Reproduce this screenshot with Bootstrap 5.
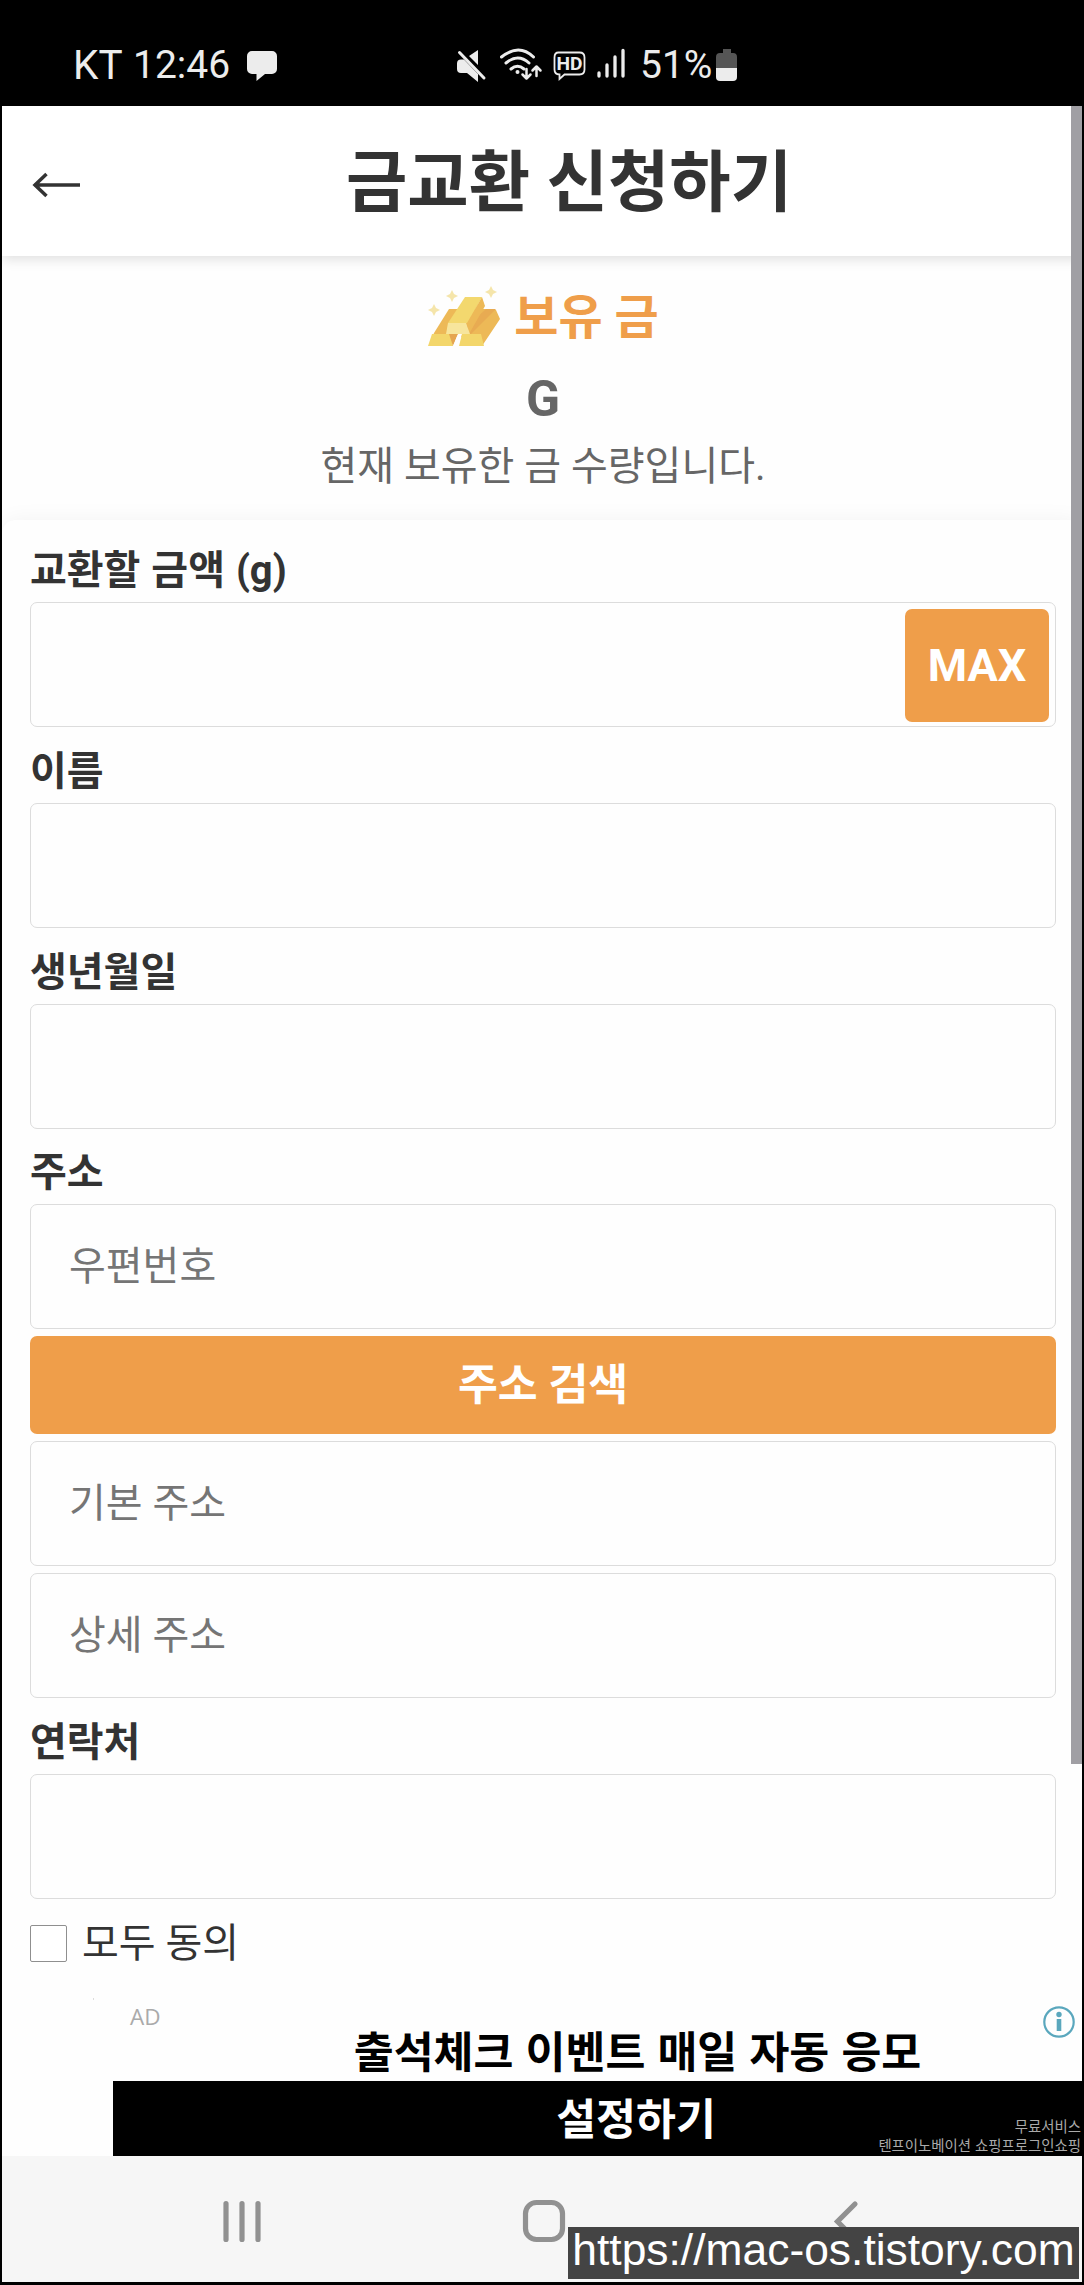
<!DOCTYPE html>
<html lang="ko">
<head>
<meta charset="utf-8">
<meta name="viewport" content="width=device-width, initial-scale=1">
<title>금교환 신청하기</title>
<link href="https://cdn.jsdelivr.net/npm/bootstrap@5.3.0/dist/css/bootstrap.min.css" rel="stylesheet">
<style>
body{background:#000;font-family:Roboto,"Noto Sans CJK KR",sans-serif;color:#333;height:2285px;overflow:hidden;line-height:1}
svg{display:block;flex:none}
.phone{height:2282px;margin:0 2px;background:#fefefe}
.status-bar{height:106px;background:#000;color:#ececec;font-size:39px;padding:42px 0 18px 73px;margin:0 -2px}
.status-bar .carrier{width:60px;font-size:40.5px}
.status-bar .clock{width:111px}
.status-icons{margin-left:177px}
.app-header{height:150px;padding-left:30px;background:#fff;box-shadow:0 3px 12px rgba(0,0,0,.13);z-index:2}
.app-header h1{font-size:66.7px;font-weight:700;line-height:90px;margin:3px 0 0 -26px}
.balance{height:264px;padding-top:24px;background:#fefefe;color:#666}
.balance h2{font-size:48px;font-weight:700;line-height:76px;color:#ef9e4a;margin:0}
.balance .amount{font-size:50px;font-weight:700;line-height:60px;margin:13px -2px 0 0}
.balance p{font-size:40px;line-height:52px;margin:12px -2px 0 0}
.balance svg{margin:-3px 13px 0 2px}
.exchange{padding:6px 26px 0 28px;background:#fefefe;border-radius:14px 14px 0 0;box-shadow:0 0 22px rgba(0,0,0,.05);z-index:1;height:1477px}
.exchange .form-label{display:block;font-size:40px;font-weight:700;line-height:52px;margin:0;padding:19px 0 0;height:76px;word-spacing:1px}
.exchange .form-label.tight{height:75px;padding-top:18px}
.exchange .form-control{height:125px;border:1px solid #dcdcdc;border-radius:7px;background:#fefefe;font-size:40px;padding:0 38px;line-height:60px}
.exchange .form-control::placeholder{color:#757575;opacity:1}
.exchange .btn{--bs-btn-bg:#ef9e4a;--bs-btn-color:#fff;--bs-btn-border-color:#ef9e4a;font-size:43.3px;font-weight:700;border:0;border-radius:7px;line-height:1;padding:2px 0 0}
.stack{gap:7px}
.exchange .btn-max{width:144px;height:113px;top:7px;right:7px;font-size:45px;padding:0 0 1px}
.btn-find{height:98px}
.agree{height:60px;margin-top:14px}
.agree .form-check-input{width:37px;height:37px;border:1px solid #8f8f8f;border-radius:2px;margin:0;background:#fff}
.agree label{font-size:40px;line-height:52px;margin-left:15px;padding-top:2px}
.ad-banner{height:159px;padding-top:1px;background:#fefefe;color:#000;font-family:"Noto Sans CJK KR",sans-serif;font-weight:700;font-size:43.4px;z-index:2}
.ad-specks{top:1px;left:88px}
.ad-body{margin-left:111px}
.ad-top{height:83px;background:#fefefe}
.ad-tag{font:400 22.5px "Open Sans",sans-serif;color:#aaa;top:3px;left:17px}
.ad-title{line-height:60px;padding-top:21px;text-align:center;padding-left:80px}
.ad-cta{height:75px;background:#000;color:#fff;text-align:center;padding-left:77px;line-height:71px}
.ad-note{font-size:14.4px;line-height:19px;font-weight:400;color:#aaa;right:1px;bottom:2px;text-align:right;white-space:nowrap}
.info{right:7px;top:8px}
.nav-keys{height:126px;background:#f6f6f6}
.track{left:1071px;top:106px;width:11px;height:1658px;background:#a09fa4;z-index:5}
.site-mark{left:568px;top:2227px;width:511px;height:52px;background:#444;color:#fff;font:44.4px/46px "Liberation Sans",sans-serif;text-align:center;white-space:nowrap;z-index:6}
</style>
</head>
<body>
<div class="phone d-flex flex-column">
  <div class="status-bar d-flex align-items-center">
    <span class="carrier">KT</span><span class="clock">12:46</span>
    <svg width="34" height="34" viewBox="0 0 34 34" fill="#ececec"><path d="M8 3h20a5 5 0 0 1 5 5v13a5 5 0 0 1-5 5h-7l-8.500 7V26H8a5 5 0 0 1-5-5V8a5 5 0 0 1 5-5z"/></svg>
    <div class="status-icons d-flex align-items-center">
      <svg width="181" height="40" viewBox="0 0 181 40" fill="none" stroke="#ececec">
        <g transform="translate(0 3)">
        <path d="M2 15.500q0-4 4-4h3L23 26v8L12 25H6q-4 0-4-4zM14 8l9-6v15z" fill="#ececec" stroke="none"/>
        <path d="M4.500 4.500 29 30" stroke-width="3" stroke-linecap="round"/>
        <g stroke-width="3" stroke-linecap="round"><path d="M46.500 9q17.500-14 32 0M51 15q12-10 23 0M56 21q6.500-5.500 13 0"/><circle cx="62.500" cy="24" r="1" stroke-width="2"/></g>
        <path d="M71.500 21v9M67.500 26.500l4 4 4-4M81.500 28v-9M77.500 22.500l4-4 4 4" stroke-width="2.500" stroke-linecap="round" stroke-linejoin="round"/>
        <path d="M103.500 4.500h21q5 0 5 5v12q0 5-5 5h-15l-5 4.500v-4.500q-5 0-5-5v-12q0-5 4-5z" stroke-width="1.800"/>
        <text x="101.500" y="22" font-size="18.500" font-weight="700" font-family="Roboto" fill="#ececec" stroke="none" textLength="26" lengthAdjust="spacingAndGlyphs">HD</text>
        <path d="M144 25v3M152 17v11M160 9v19M168 2.500v25.500" stroke-width="3.300" stroke-linecap="round"/>
        </g>
      </svg>
      <span class="ms-1">51%</span>
      <svg class="ms-1" width="22" height="34" viewBox="0 0 22 34"><path d="M7 1h8v4h2q4 0 4 4v11H0V9q0-4 4-4h3z" fill="#555"/><path d="M0 20h21v9q0 4-4 4H4q-4 0-4-4z" fill="#ececec"/></svg>
    </div>
  </div>

  <header class="app-header d-flex align-items-center position-relative">
    <svg width="50" height="26" viewBox="0 0 50 26" fill="none" stroke="#333" stroke-width="3.500" class="mt-2"><path d="M2 13h46M14.500 2 3 13l11.500 11"/></svg>
    <h1 class="flex-grow-1 text-center">금교환 신청하기</h1>
  </header>

  <section class="balance text-center position-relative">
    <div class="d-flex justify-content-center align-items-center">
      <svg width="74" height="64" viewBox="0 0 74 64">
        <path d="M22 24h37l10 1 4 9-18 27-27-12-6 12H2l5-13z" fill="#edb957"/>
        <path d="M59 24h10L44 49 34 47z" fill="#e8ab52"/>
        <path d="M38 12h17L41 38H21z" fill="#f3d86e"/><path d="M55 12l3 9-16 28-2-11z" fill="#edb957"/>
        <path d="M21 38h18l4 11H19z" fill="#f7e59c"/>
        <path d="M5 49h19l2 12H1zM35 49h19l3 12H32z" fill="#f3d66b"/><path d="M22 49h9l-5 12z" fill="#e5a550"/><path d="M31 49h4l-4 12h-5z" fill="#fefefe"/>
        <g fill="#f5e5aa"><path d="M25 5l2 4 4 2-4 2-2 4-2-4-4-2 4-2zM64 1l2 4 4 2-4 2-2 4-2-4-4-2 4-2zM7 19l2 4 4 2-4 2-2 4-2-4-4-2 4-2z"/></g>
      </svg>
      <h2>보유 금</h2>
    </div>
    <div class="amount">G</div>
    <p>현재 보유한 금 수량입니다.</p>
  </section>

  <form class="exchange position-relative">
    <label class="form-label" for="gold">교환할 금액 (g)</label>
    <div class="position-relative">
      <input class="form-control" id="gold" type="text">
      <button class="btn btn-max position-absolute" type="button">MAX</button>
    </div>
    <label class="form-label" for="name">이름</label>
    <input class="form-control" id="name" type="text">
    <label class="form-label" for="birth">생년월일</label>
    <input class="form-control" id="birth" type="text">
    <label class="form-label tight" for="zip">주소</label>
    <div class="stack d-flex flex-column">
      <input class="form-control" id="zip" type="text" placeholder="우편번호">
      <button class="btn btn-find w-100" type="button">주소 검색</button>
      <input class="form-control" type="text" placeholder="기본 주소">
      <input class="form-control" type="text" placeholder="상세 주소">
    </div>
    <label class="form-label" for="tel">연락처</label>
    <input class="form-control" id="tel" type="text">
    <div class="agree d-flex align-items-center">
      <input class="form-check-input" id="agree" type="checkbox">
      <label for="agree">모두 동의</label>
    </div>
  </form>

  <div class="ad-banner position-relative">
    <svg class="ad-specks position-absolute" width="420" height="2" viewBox="0 0 420 2" stroke="#bbb" stroke-width="1"><path d="M3 1h1M80 1h2M206 1h4M401 1h3"/></svg>
    <div class="ad-body">
      <div class="ad-top position-relative">
        <span class="ad-tag position-absolute">AD</span>
        <div class="ad-title">출석체크 이벤트 매일 자동 응모</div>
        <svg class="info position-absolute" width="32" height="32" viewBox="0 0 32 32"><circle cx="16" cy="16" r="14.700" fill="#fefefe" stroke="#5aa7bd" stroke-width="2.200"/><circle cx="16" cy="8.500" r="2.700" fill="#5aa7bd"/><path d="M16 13v12" stroke="#5aa7bd" stroke-width="4.600"/></svg>
      </div>
      <div class="ad-cta position-relative">설정하기
        <div class="ad-note position-absolute">무료서비스<br>텐프이노베이션 쇼핑프로그인쇼핑</div>
      </div>
    </div>
  </div>

  <nav class="nav-keys">
    <svg width="1080" height="126" viewBox="0 0 1080 126" fill="none" stroke="#919191" stroke-width="5.200" stroke-linecap="round">
      <path d="M224 47.500v36M240 47.500v36M256 47.500v36"/>
      <rect x="523.500" y="46.500" width="37" height="37" rx="11"/>
      <path d="M853 48 835.500 65.500 853 83"/>
    </svg>
  </nav>
</div>
<div class="track position-absolute"></div>
<div class="site-mark position-absolute">https://mac-os.tistory.com</div>
<script src="https://cdn.jsdelivr.net/npm/bootstrap@5.3.0/dist/js/bootstrap.bundle.min.js"></script>
</body>
</html>
